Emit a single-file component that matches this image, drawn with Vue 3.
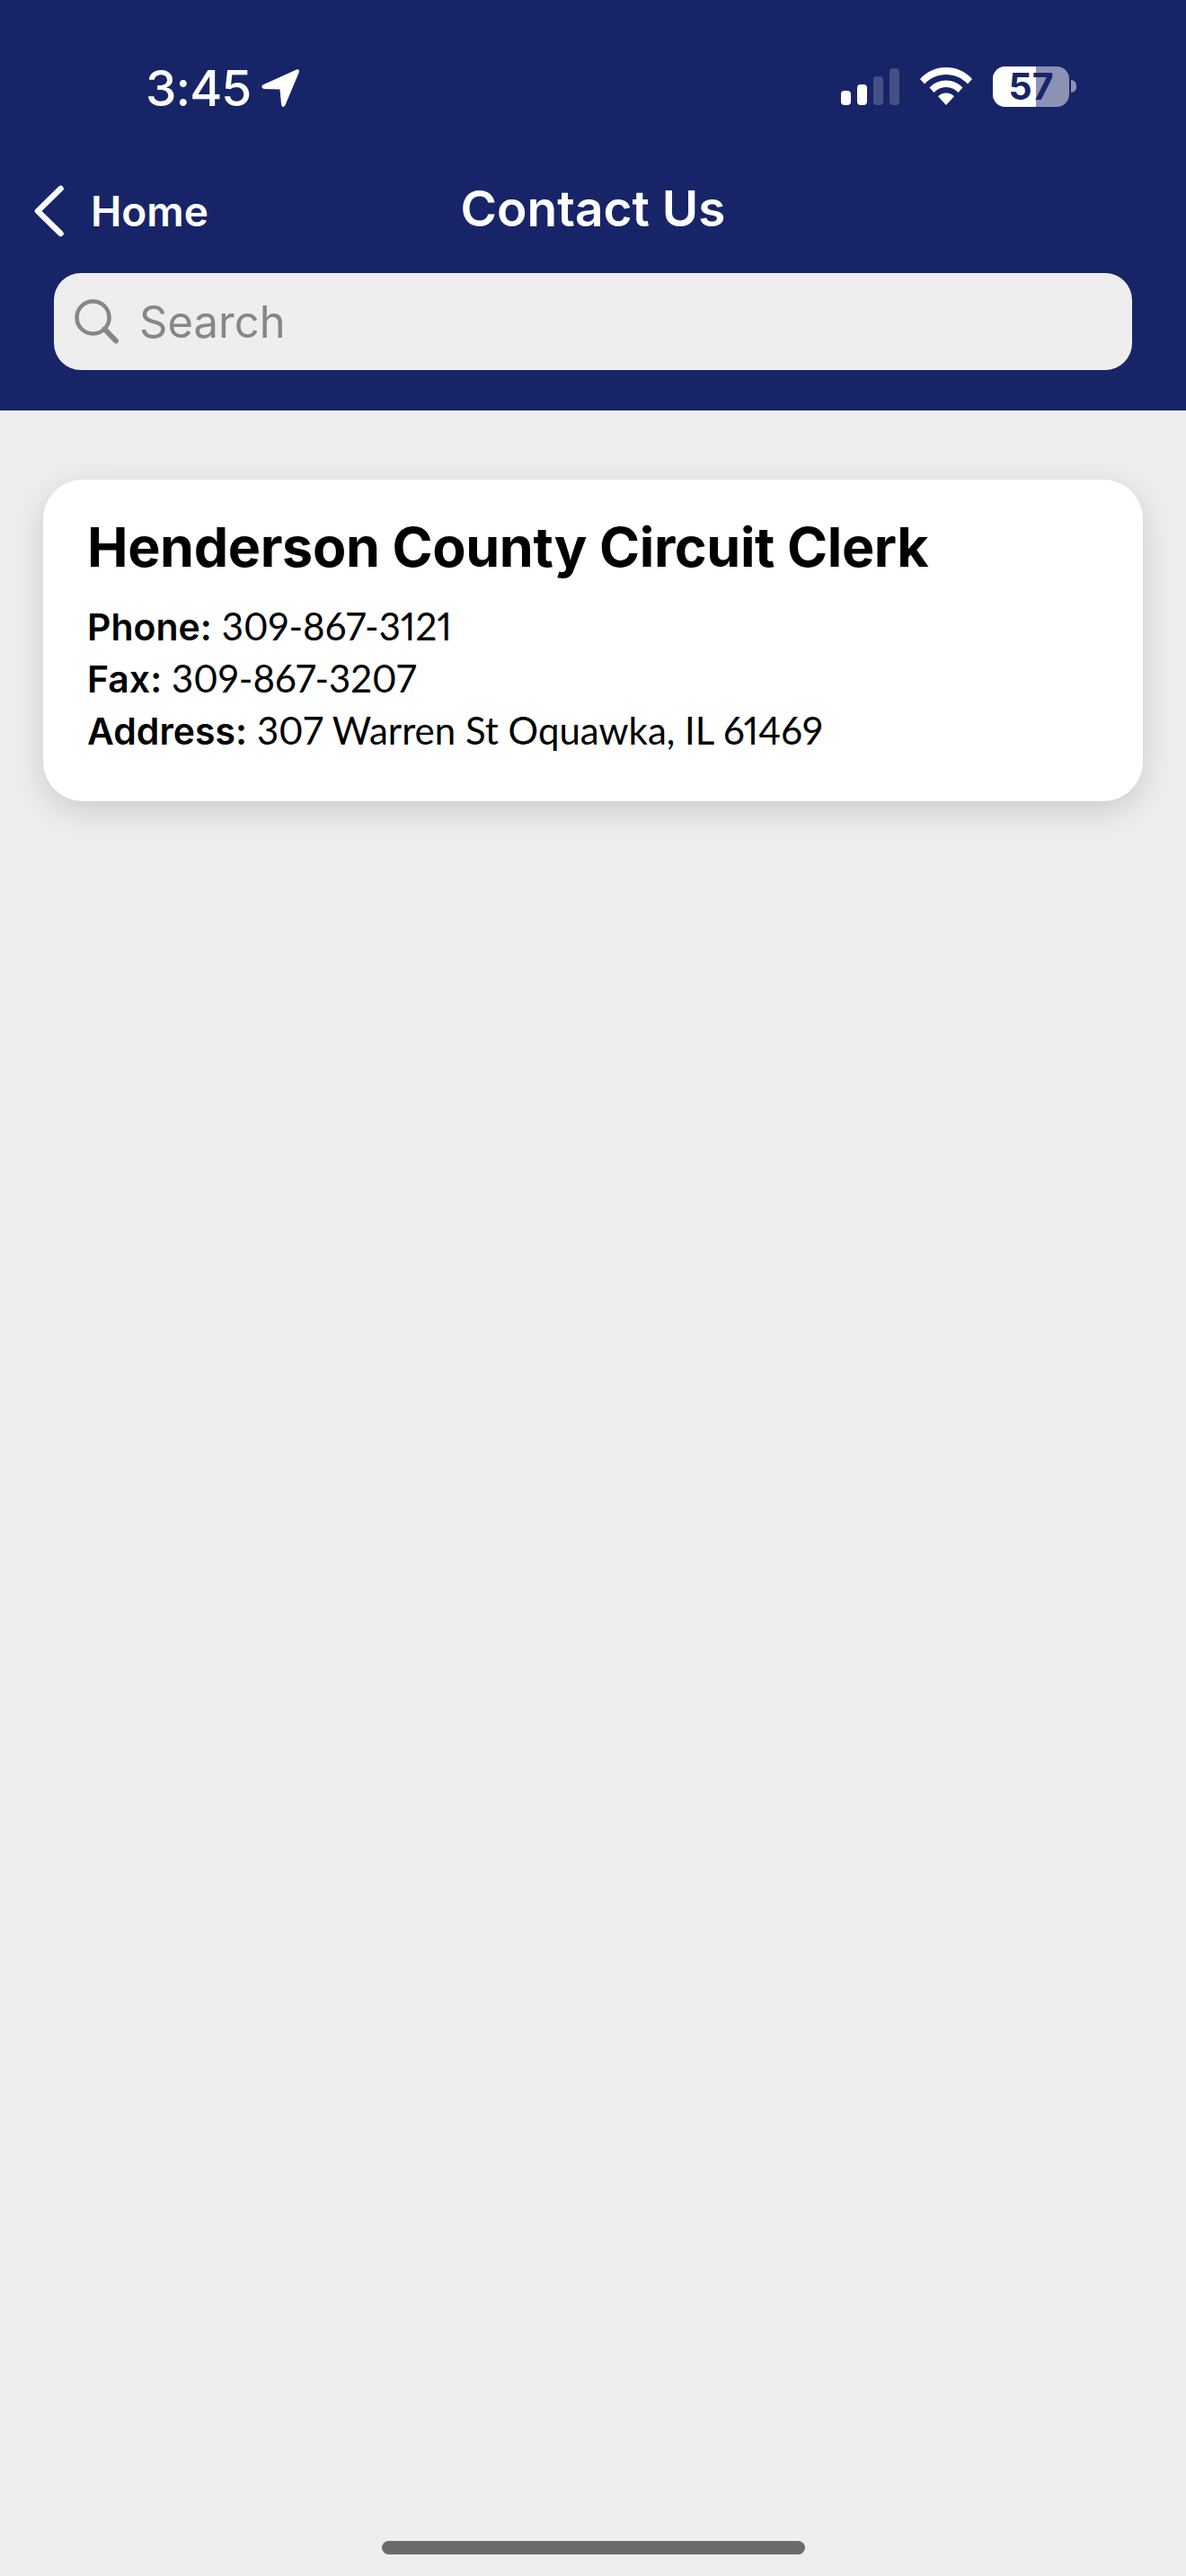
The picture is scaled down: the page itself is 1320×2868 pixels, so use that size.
<template>
  <div class="page">
    <header class="top">
      <div class="status">
        <div class="time">
          <span>3:45</span>
          <svg class="arrow" viewBox="0 0 42 42" width="42" height="42">
            <path d="M39 .6 2 17.300c-2.600 1.300-2 4.400.9 4.600l17.600.7 1.600 17c.3 2.800 3.500 3.100 4.400.5L41.800 3.400C42.400 1.300 41 -.3 39 .6Z" fill="#fff" />
          </svg>
        </div>
        <div class="indicators">
          <div class="signal">
            <span class="bar b1"></span>
            <span class="bar b2"></span>
            <span class="bar b3 dim"></span>
            <span class="bar b4 dim"></span>
          </div>
          <svg class="wifi" viewBox="0 0 58 42" width="58" height="42">
            <path d="M29 0C18 0 8 4 0 13l5 5.500C11.500 11.500 20 8 29 8s17.500 3.500 24 10.500l5-5.500C50 4 40 0 29 0Z" fill="#fff" />
            <path d="M29 14.500c-7 0-13.500 2.800-18.500 8l5 5.500c3.500-3.800 8.500-6 13.500-6s10 2.200 13.500 6l5-5.500c-5-5.200-11.500-8-18.500-8Z" fill="#fff" />
            <path d="M29 28.500c-3.500 0-6.800 1.400-9 3.800L29 42l9-9.700c-2.200-2.400-5.500-3.800-9-3.800Z" fill="#fff" />
          </svg>
          <div class="battery">
            <div class="cell">
              <div class="fill" :style="{ width: battery + '%' }"></div>
              <span class="level">{{ battery }}</span>
            </div>
            <span class="nub"></span>
          </div>
        </div>
      </div>

      <div class="nav">
        <div class="back">
          <svg viewBox="0 0 34 58" width="34" height="58">
            <path d="M29.500 4 4 29l25.500 25" fill="none" stroke="#fff" stroke-width="6.500" stroke-linecap="round" stroke-linejoin="round" />
          </svg>
          <span>Home</span>
        </div>
        <div class="title">Contact Us</div>
      </div>

      <div class="search">
        <svg viewBox="0 0 50 50" width="50" height="50">
          <circle cx="20.500" cy="20.500" r="18" fill="none" stroke="#87878a" stroke-width="4.500" />
          <path d="M33.500 33.500 46 46.500" fill="none" stroke="#87878a" stroke-width="6" stroke-linecap="round" />
        </svg>
        <span>Search</span>
      </div>
    </header>

    <main class="content">
      <div v-for="office in offices" :key="office.name" class="card">
        <h2>{{ office.name }}</h2>
        <p><b>Phone:</b> {{ office.phone }}</p>
        <p><b>Fax:</b> {{ office.fax }}</p>
        <p><b>Address:</b> {{ office.address }}</p>
      </div>
    </main>

    <div class="home-bar"></div>
  </div>
</template>

<script setup>
const battery = 57

const offices = [
  {
    name: 'Henderson County Circuit Clerk',
    phone: '309-867-3121',
    fax: '309-867-3207',
    address: '307 Warren St Oquawka, IL 61469'
  }
]
</script>

<style>
html,
body {
  margin: 0;
  background: #eeeeee;
}
</style>

<style scoped>
.page {
  display: flex;
  flex-direction: column;
  height: 2868px;
  background: #eeeeee;
  font-family: Inter, "Liberation Sans", sans-serif;
  overflow: hidden;
}

.top {
  height: 457px;
  box-sizing: border-box;
  background: #172568;
  color: #fff;
}

.status {
  display: flex;
  justify-content: space-between;
  align-items: center;
  height: 42px;
  padding: 75px 122px 0 162px;
}

.time {
  display: flex;
  align-items: center;
  gap: 12px;
  margin-top: 4px;
  font-size: 55px;
  font-weight: 500;
  letter-spacing: -1px;
  line-height: 42px;
}

.indicators {
  display: flex;
  align-items: center;
}

.signal {
  display: flex;
  align-items: flex-end;
  gap: 7px;
  height: 42px;
  margin-right: 23px;
}

.bar {
  width: 11px;
  border-radius: 4px;
  background: #fff;
}

.bar.dim {
  opacity: 0.2;
}

.b1 { height: 16px; }
.b2 { height: 23px; }
.b3 { height: 32px; }
.b4 { height: 41px; }

.wifi {
  margin-right: 23px;
}

.battery {
  display: flex;
  align-items: center;
  gap: 2px;
}

.cell {
  position: relative;
  width: 85px;
  height: 45px;
  border-radius: 14px;
  overflow: hidden;
  background: rgba(255, 255, 255, 0.5);
}

.fill {
  height: 100%;
  background: #fff;
}

.level {
  position: absolute;
  inset: 0;
  text-align: center;
  font-size: 41px;
  font-weight: 700;
  line-height: 45px;
  color: #172568;
}

.nub {
  width: 6px;
  height: 14px;
  border-radius: 0 7px 7px 0;
  background: rgba(255, 255, 255, 0.5);
}

.nav {
  position: relative;
  display: flex;
  justify-content: center;
  align-items: center;
  height: 60px;
  margin-top: 85px;
}

.back {
  position: absolute;
  left: 38px;
  top: 4px;
  display: flex;
  align-items: center;
  gap: 29px;
  font-size: 46px;
  font-weight: 600;
}

.title {
  font-size: 55px;
  font-weight: 600;
}

.search {
  display: flex;
  align-items: center;
  gap: 22px;
  height: 108px;
  margin: 42px 60px 0;
  padding-left: 23px;
  border-radius: 30px;
  background: #eeeeee;
  color: #87878a;
  font-size: 49px;
}

.content {
  padding: 77px 48px 0;
}

.card {
  height: 358px;
  box-sizing: border-box;
  padding: 38px 49px 0;
  border-radius: 44px;
  background: #fff;
  box-shadow: 0 10px 36px rgba(0, 0, 0, 0.15);
  color: #000;
}

.card h2 {
  margin: 0 0 22px;
  font-size: 61px;
  font-weight: 700;
  letter-spacing: -0.4px;
  line-height: 74px;
}

.card p {
  margin: 0;
  font-family: Lato, "Open Sans", sans-serif;
  font-size: 42px;
  font-variant-numeric: proportional-nums;
  line-height: 58px;
}

.card b {
  font-family: Inter, "Liberation Sans", sans-serif;
  font-size: 41px;
  font-weight: 600;
  line-height: 1;
}

.home-bar {
  width: 471px;
  height: 15px;
  margin: auto auto 24px;
  border-radius: 8px;
  background: #6b6b6b;
}
</style>
